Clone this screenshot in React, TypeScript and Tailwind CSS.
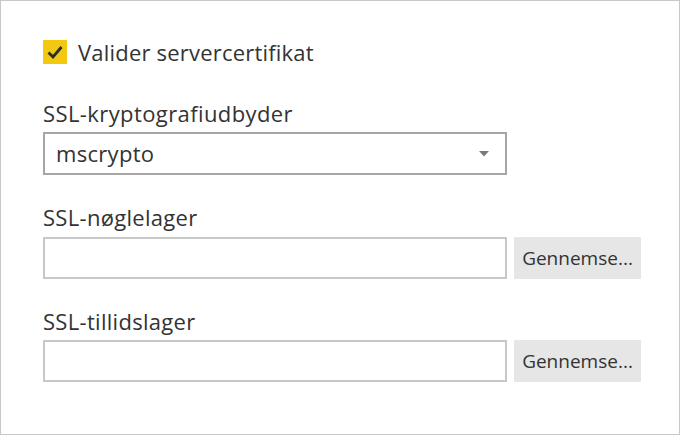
import React from "react";

const font = { fontFamily: '"Open Sans", "Noto Sans", sans-serif' };

export default function App() {
  return (
    <div
      className="w-[680px] h-[435px] bg-white border border-[#c8c8c8] box-border pl-[42px] pt-[39px] text-[#333333]"
      style={font}
    >
      <div className="flex items-center h-[24px]">
        <div className="w-[24px] h-[24px] bg-[#f2c811] flex items-center justify-center">
          <svg width="20" height="20" viewBox="0 0 20 20">
            <path d="M3.5 10.5 L8 15 L16.5 5" fill="none" stroke="#2b2b2b" strokeWidth="2.8" />
          </svg>
        </div>
        <span className="ml-[11px] text-[22px] leading-[24px] tracking-[0.2px]">Valider servercertifikat</span>
      </div>

      <div className="mt-[35px] text-[22px] leading-[28px] tracking-[0.4px]">SSL-kryptografiudbyder</div>
      <div className="mt-[5px] w-[464px] h-[43px] border-2 border-[#a6a6a6] box-border flex items-center justify-between pl-[11px] pr-[16px]">
        <span className="text-[22px] tracking-[0.3px]">mscrypto</span>
        <svg width="10" height="6" viewBox="0 0 10 6">
          <path d="M0 0 L10 0 L5 5.5 Z" fill="#7a7a7a" />
        </svg>
      </div>

      <div className="mt-[28px] text-[22px] leading-[28px] tracking-[0.3px]">SSL-nøglelager</div>
      <div className="mt-[6px] flex gap-[7px]">
        <div className="w-[464px] h-[42px] border-2 border-[#c8c8c8] box-border" />
        <div className="w-[127px] h-[42px] bg-[#e6e6e6] flex items-center justify-center text-[19px]">Gennemse...</div>
      </div>

      <div className="mt-[28px] text-[22px] leading-[28px] tracking-[0.3px]">SSL-tillidslager</div>
      <div className="mt-[5px] flex gap-[7px]">
        <div className="w-[464px] h-[42px] border-2 border-[#c8c8c8] box-border" />
        <div className="w-[127px] h-[42px] bg-[#e6e6e6] flex items-center justify-center text-[19px]">Gennemse...</div>
      </div>
    </div>
  );
}
